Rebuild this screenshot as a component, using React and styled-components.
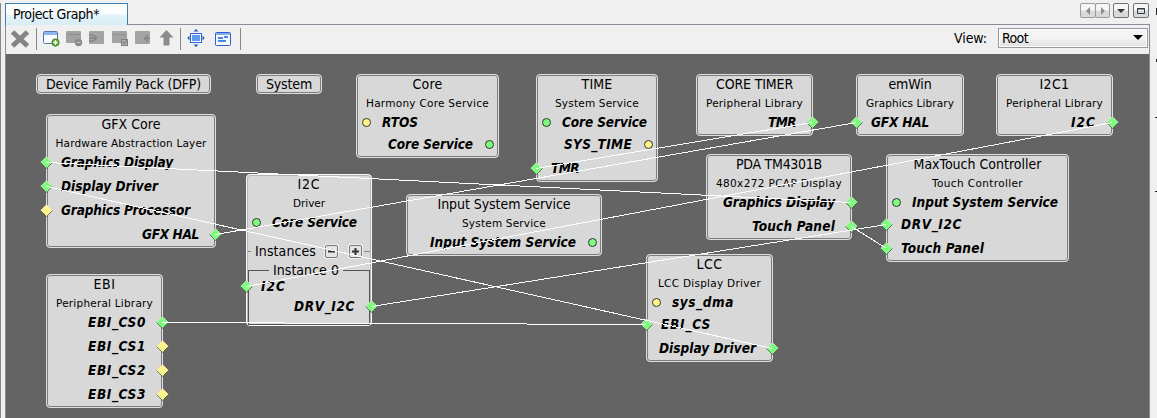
import React, { useLayoutEffect, useRef } from "react";
import styled, { createGlobalStyle } from "styled-components";

const Global = createGlobalStyle`
  * { box-sizing: border-box; }
  body {
    margin: 0;
    background: #f0f0f0;
    font-family: "DejaVu Sans Condensed", "DejaVu Sans", sans-serif;
    font-stretch: condensed;
    font-size: 14px;
    color: #000;
    overflow: hidden;
  }
`;

const Window = styled.div`
  display: grid;
  grid-template-columns: 5px 1145px 7px;
  width: 1157px;
  height: 418px;
`;

const LeftEdge = styled.div`
  margin-top: 3px;
  border-left: 1px solid #85858f;
`;

const RightEdge = styled.div`
  position: relative;
`;

const EdgeMark = styled.i`
  position: absolute;
  right: 0;
  top: ${(p) => p.$y}px;
  width: ${(p) => p.$w}px;
  height: ${(p) => p.$h}px;
  background: #222;
`;

const Main = styled.div`
  display: flex;
  flex-direction: column;
`;

const TabBar = styled.div`
  display: flex;
  height: 25px;
  padding-top: 3px;
`;

const Tab = styled.div`
  width: 123px;
  height: 22px;
  padding-left: 7px;
  line-height: 21px;
  border: 1px solid #3c7fb1;
  border-bottom: 0;
  background: linear-gradient(#fbfdfe 0 45%, #e3f3f9 55%, #d8edf5);
`;

const TabRest = styled.div`
  flex: 1;
  display: flex;
  justify-content: flex-end;
  padding-right: 1px;
  border-bottom: 1px solid #8b8b99;
`;

const WinButton = styled.div`
  display: flex;
  align-items: center;
  justify-content: center;
  width: ${(p) => p.$w || 16}px;
  height: 15px;
  margin-left: ${(p) => p.$gap || 0}px;
  border: 1px solid ${(p) => (p.$dim ? "#9b9b9b" : "#6d737b")};
  border-radius: 2px;
  background: linear-gradient(#f6f6f6 45%, #d9d9d9 55%);
  svg { display: block; }
`;

const Body = styled.div`
  flex: 1;
  display: flex;
  flex-direction: column;
  border: solid #8b8b99;
  border-width: 0 1px;
`;

const Toolbar = styled.div`
  display: flex;
  height: 29px;
  padding: 3px 1px 0 3px;
  background: #f0f0f0;
`;

const Tool = styled.div`
  width: ${(p) => p.$w}px;
  height: 22px;
  svg { display: block; }
`;

const Separator = styled.div`
  width: 1px;
  height: 22px;
  background: #868686;
`;

const ViewPicker = styled.div`
  flex: 1;
  display: flex;
  justify-content: flex-end;
  line-height: 21px;
  gap: 11px;
`;

const Select = styled.div`
  display: flex;
  align-items: center;
  justify-content: space-between;
  width: 150px;
  height: 20px;
  padding: 0 4px 0 3px;
  border: 1px solid #98989f;
  box-shadow: inset 0 0 0 1px #fdfdfd;
  background: linear-gradient(#f4f4f4 50%, #dfdfdf);
`;

const Canvas = styled.div`
  position: relative;
  flex: 1;
  background: #646464;
  overflow: hidden;
`;

const Card = styled.div`
  position: absolute;
  left: ${(p) => p.$x - 6}px;
  top: ${(p) => p.$y - 54}px;
  width: ${(p) => p.$w}px;
  height: ${(p) => p.$h}px;
  border: 1px solid ${(p) => (p.$selected ? "#fafafa" : "#dedede")};
  border-radius: 4px;
  background: #d8d8d8;
  box-shadow: inset 0 0 0 1px ${(p) => (p.$selected ? "#b4b4b4" : "#7c7c7c")};
`;

const Title = styled.div`
  height: 18px;
  line-height: 18px;
  text-align: center;
`;

const Subtitle = styled.div`
  height: 18px;
  line-height: 21px;
  text-align: center;
  font-family: "DejaVu Sans", sans-serif;
  font-stretch: normal;
  font-size: 10.5px;
`;

const PortRow = styled.div`
  position: relative;
  display: flex;
  align-items: center;
  justify-content: ${(p) => (p.$right ? "flex-end" : "flex-start")};
  height: 22px;
  margin-bottom: ${(p) => (p.$shape === "diamond" || p.$right ? 2 : 0)}px;
  padding-left: ${(p) => (p.$shape === "diamond" ? 14 : 25)}px;
  padding-right: ${(p) => (p.$right ? (p.$shape === "diamond" ? 16 : 25) : 0)}px;
  font-size: 13.5px;
  font-weight: bold;
  font-style: oblique;
`;

const Marker = styled.svg`
  position: absolute;
  top: 5px;
  width: 13px;
  height: 13px;
  ${(p) => (p.$right ? "right" : "left")}: ${(p) => (p.$shape === "diamond" ? -7 : p.$right ? 2 : 3)}px;
`;

const FittedText = styled.span`
  display: inline-block;
  white-space: pre;
`;

const Legend = styled.div`
  display: flex;
  align-items: center;
  height: 16px;
  margin: ${(p) => p.$margin};
  &::before, &::after {
    content: "";
    height: 1px;
    background: ${(p) => p.$line};
  }
  &::before { width: ${(p) => p.$lead}px; margin-right: 4px; }
  &::after { flex: 1; margin-left: ${(p) => p.$gap}px; }
`;

const SmallButton = styled.div`
  width: 13px;
  height: 13px;
  margin-left: ${(p) => p.$gap}px;
  border: 1px solid #777;
  border-radius: 2px;
  background: #e4e4e4;
  box-shadow: 0 0 0 1px #eee;
  svg { display: block; }
`;

const InstanceFrame = styled.div`
  height: 55px;
  margin: -8px 1px 0;
  padding-top: 5px;
  border: solid #555;
  border-width: 0 1px 1px;
  & > div { margin-left: -2px; margin-right: -2px; }
  & > div + div { margin-top: -4px; }
`;

const Wires = styled.svg`
  position: absolute;
  left: 0;
  top: 0;
`;

/* Spreads the letters so that the label takes exactly the given width. */
function Fit({ w, children }) {
  const ref = useRef(null);
  useLayoutEffect(() => {
    const el = ref.current;
    el.style.letterSpacing = "0px";
    const spacing = (w - el.getBoundingClientRect().width) / children.length;
    el.style.letterSpacing = spacing + "px";
  }, [w, children]);
  return <FittedText ref={ref}>{children}</FittedText>;
}

const GREEN = "#7dfc7d";
const YELLOW = "#fff68c";

function Port({ label, w, right, shape = "diamond", color = GREEN }) {
  return (
    <PortRow $right={right} $shape={shape}>
      <Fit w={w}>{label}</Fit>
      <Marker $right={right} $shape={shape} viewBox="0 0 13 13">
        {shape === "diamond" ? (
          <>
            <path d="M6.5 .5L12.5 6.5L6.5 12.5L.5 6.5Z" fill={color} />
            <path d="M.5 6.5L6.5 .5L12.5 6.5" fill="none" stroke="#e4e4e4" strokeWidth=".6" />
            <path d="M.5 6.5L6.5 12.5L12.5 6.5" fill="none" stroke="#555" strokeWidth=".8" />
          </>
        ) : (
          <circle cx="6.5" cy="6.5" r="4" fill={color} stroke="#333" />
        )}
      </Marker>
    </PortRow>
  );
}

const nodes = [
  { box: [36, 74, 175, 20], title: ["Device Family Pack (DFP)", 155] },
  { box: [256, 74, 66, 20], title: ["System", 46] },
  { box: [46, 114, 170, 134], title: ["GFX Core", 59], sub: ["Hardware Abstraction Layer", 151], ports: [
    { label: "Graphics Display", w: 112 },
    { label: "Display Driver", w: 97 },
    { label: "Graphics Processor", w: 129, color: YELLOW },
    { label: "GFX HAL", w: 57, right: true },
  ] },
  { box: [356, 74, 143, 84], title: ["Core", 30], sub: ["Harmony Core Service", 123], ports: [
    { label: "RTOS", w: 36, shape: "circle", color: YELLOW },
    { label: "Core Service", w: 85, shape: "circle", right: true },
  ] },
  { box: [536, 74, 122, 108], title: ["TIME", 31], sub: ["System Service", 84], ports: [
    { label: "Core Service", w: 85, shape: "circle" },
    { label: "SYS_TIME", w: 68, shape: "circle", color: YELLOW, right: true },
    { label: "TMR", w: 28 },
  ] },
  { box: [696, 74, 117, 62], title: ["CORE TIMER", 77], sub: ["Peripheral Library", 97], ports: [
    { label: "TMR", w: 28, right: true },
  ] },
  { box: [856, 74, 108, 62], title: ["emWin", 43], sub: ["Graphics Library", 88], ports: [
    { label: "GFX HAL", w: 58 },
  ] },
  { box: [996, 74, 117, 62], title: ["I2C1", 30], sub: ["Peripheral Library", 97], ports: [
    { label: "I2C", w: 25, right: true },
  ] },
  { box: [406, 194, 196, 62], title: ["Input System Service", 133], sub: ["System Service", 84], ports: [
    { label: "Input System Service", w: 146, shape: "circle", right: true },
  ] },
  { box: [706, 154, 146, 86], title: ["PDA TM4301B", 86], sub: ["480x272 PCAP Display", 126], ports: [
    { label: "Graphics Display", w: 112, right: true },
    { label: "Touch Panel", w: 83, right: true },
  ] },
  { box: [886, 154, 183, 108], title: ["MaxTouch Controller", 128], sub: ["Touch Controller", 91], ports: [
    { label: "Input System Service", w: 146, shape: "circle" },
    { label: "DRV_I2C", w: 61 },
    { label: "Touch Panel", w: 83 },
  ] },
  { box: [646, 254, 127, 108], title: ["LCC", 26], sub: ["LCC Display Driver", 103], ports: [
    { label: "sys_dma", w: 62, shape: "circle", color: YELLOW },
    { label: "EBI_CS", w: 50 },
    { label: "Display Driver", w: 97, right: true },
  ] },
  { box: [46, 274, 117, 134], title: ["EBI", 22], sub: ["Peripheral Library", 97], ports: [
    { label: "EBI_CS0", w: 58, right: true },
    { label: "EBI_CS1", w: 58, right: true, color: YELLOW },
    { label: "EBI_CS2", w: 58, right: true, color: YELLOW },
    { label: "EBI_CS3", w: 58, right: true, color: YELLOW },
  ] },
];

const wires = [
  [46, 162, 851, 202],
  [46, 186, 772, 348],
  [215, 234, 856, 122],
  [246, 286, 1112, 122],
  [371, 306, 886, 224],
  [536, 168, 812, 122],
  [162, 322, 646, 324],
  [851, 226, 886, 248],
];

function Node({ box, title, sub, ports = [], selected, children }) {
  const [x, y, w, h] = box;
  return (
    <Card $x={x} $y={y} $w={w} $h={h} $selected={selected}>
      <Title><Fit w={title[1]}>{title[0]}</Fit></Title>
      {sub && <Subtitle><Fit w={sub[1]}>{sub[0]}</Fit></Subtitle>}
      {ports.map((p) => <Port key={p.label} {...p} />)}
      {children}
    </Card>
  );
}

const Svg = ({ w = 22, h = 22, children }) => (
  <svg width={w} height={h} viewBox={`0 0 ${w} ${h}`}>{children}</svg>
);

function ToolIcons() {
  return (
    <>
      <Tool $w={27}><Svg><path d="M3.5 4L18.5 18M18.5 4L3.5 18" stroke="#858585" strokeWidth="5" /></Svg></Tool>
      <Separator />
      <Tool $w={24}>
        <Svg w={24}>
          <rect x="6.5" y="3.5" width="14" height="12" rx="1" fill="#f8fbff" stroke="#5577a8" />
          <path d="M7 4h13v3H7z" fill="#8fb6ec" />
          <circle cx="18.5" cy="14.5" r="3.7" fill="#5ca52c" stroke="#3f7c22" strokeWidth=".7" />
          <path d="M16.3 14.5h4.4M18.5 12.3v4.4" stroke="#fff" strokeWidth="1.5" />
        </Svg>
      </Tool>
      <Tool $w={23}>
        <Svg w={23}>
          <rect x="5" y="3" width="15" height="12" rx="1" fill="#a3a3a3" />
          <path d="M6 6.5h13" stroke="#8d8d8d" />
          <circle cx="17.5" cy="14.5" r="3.7" fill="#8b8b8b" />
          <path d="M15.5 14.5h4" stroke="#c8c8c8" />
        </Svg>
      </Tool>
      <Tool $w={23}>
        <Svg w={23}>
          <rect x="5" y="3" width="15" height="13" rx="1" fill="#a3a3a3" />
          <path d="M5 7h4M5 13h4M5 10h7M9.5 7l3 3l-3 3" fill="none" stroke="#858585" strokeWidth="1.5" />
        </Svg>
      </Tool>
      <Tool $w={23}>
        <Svg w={23}>
          <rect x="5" y="3" width="15" height="12" rx="1" fill="#a3a3a3" />
          <path d="M6 6.5h13" stroke="#909090" />
          <rect x="14.5" y="11.5" width="6" height="6" fill="#aaa" stroke="#808080" />
          <path d="M16 14l1.3 1.7L20 12.5" fill="none" stroke="#717171" />
        </Svg>
      </Tool>
      <Tool $w={23}>
        <Svg w={23}>
          <rect x="5" y="3" width="15" height="13" rx="1" fill="#a3a3a3" />
          <path d="M18 7l-3.5 3.5L18 14M15 10.5h5" fill="none" stroke="#858585" strokeWidth="1.3" />
        </Svg>
      </Tool>
      <Tool $w={27}><Svg w={27}><path d="M13.5 2L20.5 9.5H16.5V17.5H10.5V9.5H6.5Z" fill="#8b8b8b" /></Svg></Tool>
      <Separator />
      <Tool $w={29}>
        <Svg w={29}>
          <rect x="9.5" y="5.5" width="11" height="9" fill="#fff" stroke="#3263d2" />
          <rect x="11" y="7" width="8" height="6" fill="#5c9cf0" />
          <path d="M15 1l2.5 2.5h-5zM15 19l2.5-2.5h-5zM6.3 10l2.2-2.5v5zM23.7 10l-2.2-2.5v5z" fill="#2457cd" />
        </Svg>
      </Tool>
      <Tool $w={30}>
        <Svg w={30}>
          <rect x="5.5" y="4.5" width="15" height="13" rx="1" fill="#f7faff" stroke="#2e5bd1" />
          <path d="M6 5h14v2H6z" fill="#86acf0" />
          <path d="M8 10h5M14 9h4M8 13h8" stroke="#4686e8" strokeWidth="2" />
        </Svg>
      </Tool>
      <Separator />
    </>
  );
}

function I2CDriver() {
  return (
    <Node box={[246, 174, 126, 152]} selected title={["I2C", 23]} sub={["Driver", 32]}
      ports={[{ label: "Core Service", w: 85, shape: "circle" }]}>
      <Legend $margin="10px 1px 0" $line="#8a8a8a" $lead={3} $gap={2}>
        <Fit w={61}>Instances</Fit>
        <SmallButton $gap={9}><Svg w={11} h={11}><path d="M2 5.5h7" stroke="#333" strokeWidth="2" /></Svg></SmallButton>
        <SmallButton $gap={11}><Svg w={11} h={11}><path d="M2 5.5h7M5.5 2v7" stroke="#333" strokeWidth="2" /></Svg></SmallButton>
      </Legend>
      <Legend $margin="3px 1px 0" $line="#555" $lead={21} $gap={4}>
        <Fit w={66}>Instance 0</Fit>
      </Legend>
      <InstanceFrame>
        <Port label="I2C" w={25} />
        <Port label="DRV_I2C" w={61} right />
      </InstanceFrame>
    </Node>
  );
}

export default function App() {
  return (
    <Window>
      <Global />
      <LeftEdge />
      <Main>
        <TabBar>
          <Tab><Fit w={86}>Project Graph*</Fit></Tab>
          <TabRest>
            <WinButton $dim><Svg w={8} h={8}><path d="M6 0v8L2 4z" fill="#8d8d8d" /></Svg></WinButton>
            <WinButton $dim $w={15} $gap={-1}><Svg w={8} h={8}><path d="M2 0v8l4-4z" fill="#8d8d8d" /></Svg></WinButton>
            <WinButton $gap={3}><Svg w={8} h={6}><path d="M0 1h8L4 5z" fill="#303840" /></Svg></WinButton>
            <WinButton $gap={4}><Svg w={8} h={8}><path d="M.5 1.5h7v5h-7zM0 2h8" fill="none" stroke="#303840" /></Svg></WinButton>
          </TabRest>
        </TabBar>
        <Body>
          <Toolbar>
            <ToolIcons />
            <ViewPicker>
              <Fit w={33}>View:</Fit>
              <Select>
                <Fit w={26}>Root</Fit>
                <Svg w={10} h={6}><path d="M0 0h10L5 5z" fill="#000" /></Svg>
              </Select>
            </ViewPicker>
          </Toolbar>
          <Canvas>
            {nodes.map((n) => <Node key={n.title[0]} {...n} />)}
            <I2CDriver />
            <Wires width="1143" height="364" viewBox="6 54 1143 364">
              {wires.map(([x1, y1, x2, y2]) => (
                <line key={`${x1}-${y1}`} x1={x1 + 0.5} y1={y1 + 0.5} x2={x2 + 0.5} y2={y2 + 0.5}
                  stroke="#fff" shapeRendering="crispEdges" />
              ))}
            </Wires>
          </Canvas>
        </Body>
      </Main>
      <RightEdge>
        <EdgeMark $y={8} $w={1} $h={7} />
        <EdgeMark $y={59} $w={1} $h={3} />
        <EdgeMark $y={117} $w={2} $h={1} />
        <EdgeMark $y={191} $w={2} $h={1} />
      </RightEdge>
    </Window>
  );
}
